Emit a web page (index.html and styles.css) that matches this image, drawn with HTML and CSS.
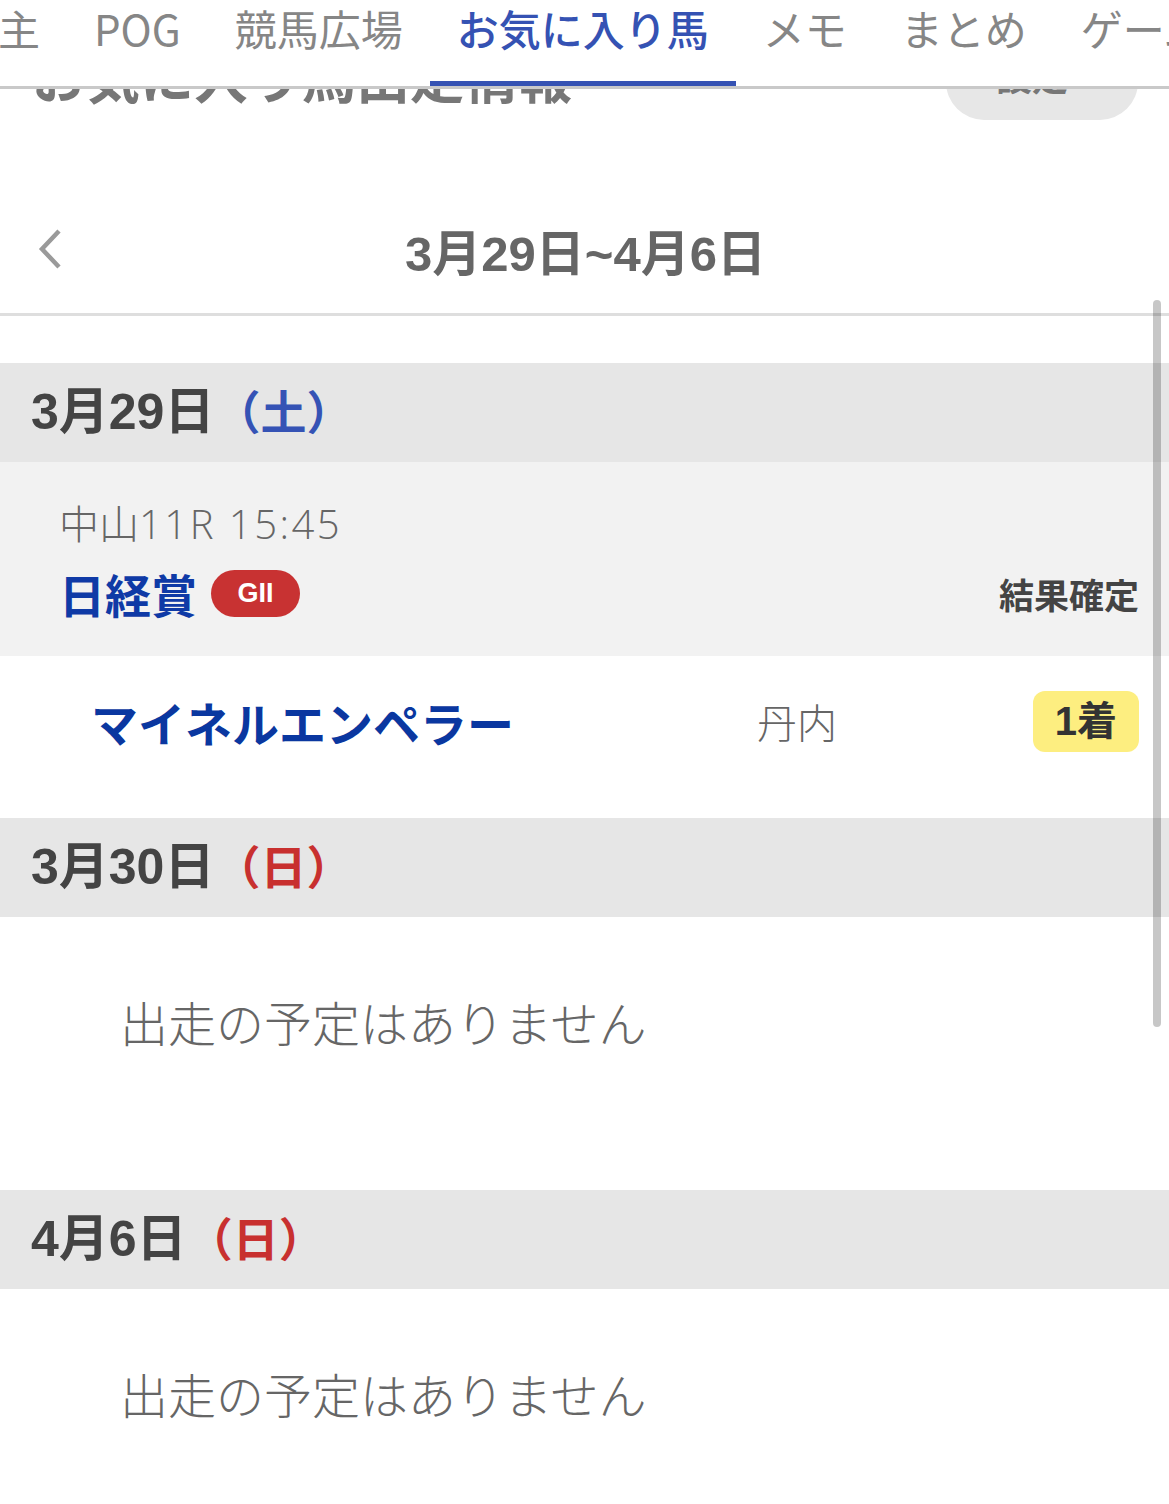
FILE: index.html
```html
<!DOCTYPE html>
<html lang="ja">
<head>
    <meta charset="UTF-8">
    <meta name="viewport" content="width=device-width, initial-scale=1.0">
    <title>お気に入り馬出走情報</title>
    <link rel="stylesheet" href="styles.css">
</head>
<body>
    <div class="page">
        <!-- Tabs -->
        <nav class="tabs">
            <div class="tab-list">
                <a class="tab">馬主</a>
                <a class="tab">POG</a>
                <a class="tab">競馬広場</a>
                <a class="tab active">お気に入り馬</a>
                <a class="tab">メモ</a>
                <a class="tab">まとめ</a>
                <a class="tab">ゲーム</a>
            </div>
        </nav>

        <!-- Title (scrolled under the tabs) -->
        <div class="title-clip">
            <div class="title-row">
                <h1 class="title">お気に入り馬出走情報</h1>
                <button class="settings">設定 ›</button>
            </div>
        </div>

        <!-- Week switcher -->
        <div class="week-nav">
            <span class="prev">
                <svg width="30" height="44" viewBox="0 0 30 44">
                    <polyline points="25,4 8,22 25,40" fill="none" stroke="#9a9a9a" stroke-width="4.5"/>
                </svg>
            </span>
            <span class="week">3月29日~4月6日</span>
        </div>

        <div class="days">
            <div class="day-head">3月29日<span class="sat">（土）</span></div>
            <div class="race">
                <div class="race-info">中山<span class="num">11R 15:45</span></div>
                <div class="race-line">
                    <span class="race-name">日経賞</span>
                    <span class="grade">GII</span>
                    <span class="status">結果確定</span>
                </div>
            </div>
            <div class="entry">
                <span class="horse">マイネルエンペラー</span>
                <span class="jockey">丹内</span>
                <span class="rank">1着</span>
            </div>

            <div class="day-head">3月30日<span class="sun">（日）</span></div>
            <div class="empty">出走の予定はありません</div>

            <div class="day-head">4月6日<span class="sun">（日）</span></div>
            <div class="empty">出走の予定はありません</div>
        </div>

        <div class="scrollbar"></div>
    </div>
</body>
</html>
```

FILE: styles.css
```css
body {
    margin: 0;
    padding: 0;
    overflow: hidden;
    background: #fff;
    font-family: "Noto Sans CJK JP", sans-serif;
    color: #444;
}
.page {
    position: relative;
    width: 1169px;
    height: 1504px;
    overflow: hidden;
}
/* Tabs */
.tabs {
    height: 86px;
    border-bottom: 3px solid #c9c9c9;
    overflow: hidden;
    background: #fff;
}
.tab-list {
    display: flex;
    margin-left: -71px;
    white-space: nowrap;
}
.tab {
    display: block;
    height: 81px;
    padding: 0 27px;
    font-size: 42px;
    line-height: 56px;
    color: #868686;
    border-bottom: 5px solid transparent;
}
.tab.active {
    color: #3552b3;
    font-weight: 500;
    border-bottom-color: #3552b3;
}
/* Title */
.title-clip {
    height: 52px;
    overflow: hidden;
    display: flex;
    align-items: flex-end;
}
.title-row {
    flex: 1;
    display: flex;
    align-items: flex-end;
    justify-content: space-between;
    padding: 0 31px 21px 32px;
}
.title {
    margin: 0 0 6px;
    font-size: 54px;
    line-height: 76px;
    font-weight: 700;
    color: #777;
}
.settings {
    width: 192px;
    height: 76px;
    padding: 0 0 14px;
    border: none;
    border-radius: 38px;
    background: #e7e7e7;
    color: #777;
    font-family: "Noto Sans CJK JP", sans-serif;
    font-size: 36px;
    font-weight: 700;
}
/* Week switcher */
.week-nav {
    position: relative;
    display: flex;
    align-items: center;
    justify-content: center;
    height: 64px;
    padding: 76px 0 32px;
    border-bottom: 3px solid #dedede;
}
.prev {
    position: absolute;
    left: 34px;
    top: 86px;
}
.week {
    font-family: "Liberation Sans", "Noto Sans CJK JP", sans-serif;
    font-size: 49px;
    font-weight: 700;
    color: #666;
    margin-left: 2px;
}
/* Days */
.days {
    padding-top: 47px;
}
.day-head {
    height: 99px;
    line-height: 99px;
    padding-left: 31px;
    background: #e6e6e6;
    font-family: "Liberation Sans", "Noto Sans CJK JP", sans-serif;
    font-size: 50px;
    font-weight: 700;
    color: #444;
}
.sat,
.sun {
    font-size: 46px;
}
.sat {
    color: #3553b5;
}
.sun {
    color: #c8302f;
}
.race {
    background: #f2f2f2;
    padding: 32px 30px 22px 59px;
}
.race-info {
    font-size: 40px;
    line-height: 56px;
    color: #666;
    font-weight: 300;
}
.race-info .num {
    font-family: "Open Sans", "Noto Sans CJK JP", sans-serif;
    letter-spacing: 2.5px;
}
.race-line {
    display: flex;
    align-items: center;
    height: 82px;
}
.race-name {
    font-size: 46px;
    font-weight: 700;
    color: #0f3aa6;
}
.grade {
    margin-left: 14px;
    width: 89px;
    height: 47px;
    line-height: 47px;
    border-radius: 24px;
    background: #c83232;
    color: #fff;
    text-align: center;
    font-family: "Liberation Sans", sans-serif;
    font-size: 27px;
    font-weight: 700;
}
.status {
    margin-left: auto;
    font-size: 35px;
    font-weight: 700;
    color: #444;
}
.entry {
    display: grid;
    grid-template-columns: 666px 1fr auto;
    align-items: center;
    padding: 35px 30px 66px 91px;
    line-height: 61px;
}
.horse {
    font-size: 47px;
    font-weight: 700;
    color: #0a37a0;
}
.jockey {
    font-size: 40px;
    color: #666;
    font-weight: 300;
}
.rank {
    height: 61px;
    padding: 0 22px;
    border-radius: 12px;
    background: #fdee80;
    font-family: "Liberation Sans", "Noto Sans CJK JP", sans-serif;
    font-size: 40px;
    font-weight: 700;
    color: #333;
}
.empty {
    padding: 72px 0 137px 120px;
    font-size: 48px;
    line-height: 64px;
    color: #666;
    font-weight: 300;
}
.scrollbar {
    position: absolute;
    right: 8px;
    top: 300px;
    width: 8px;
    height: 727px;
    border-radius: 4px;
    background: rgba(0, 0, 0, 0.22);
}
```
